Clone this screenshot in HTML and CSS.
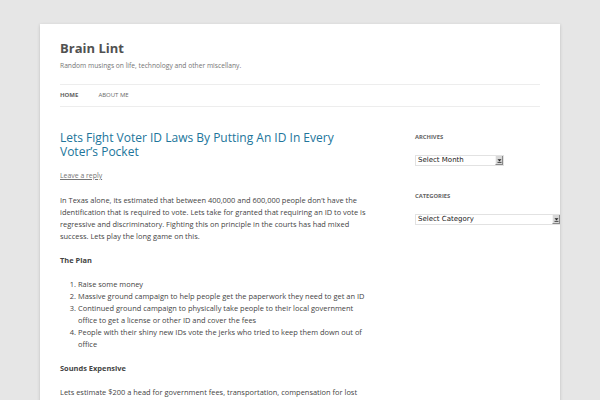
FILE: index.html
```html
<!DOCTYPE html>
<html lang="en">
<head>
<meta charset="utf-8">
<title>Brain Lint</title>
<link rel="stylesheet" href="styles.css">
</head>
<body>
<div class="site">
  <header class="site-header">
    <h1 class="site-title">Brain Lint</h1>
    <h2 class="site-description">Random musings on life, technology and other miscellany.</h2>
    <nav class="main-navigation">
      <ul class="nav-menu">
        <li class="current"><a href="#">Home</a></li>
        <li><a href="#">About Me</a></li>
      </ul>
    </nav>
  </header>
  <div class="main">
    <div class="site-content">
      <article class="post">
        <header class="entry-header">
          <h1 class="entry-title"><a href="#">Lets Fight Voter ID Laws By Putting An ID In Every Voter’s Pocket</a></h1>
          <div class="comments-link"><a href="#">Leave a reply</a></div>
        </header>
        <div class="entry-content">
          <p>In Texas alone, its estimated that between 400,000 and 600,000 people don’t have the identification that is required to vote. Lets take for granted that requiring an ID to vote is regressive and discriminatory. Fighting this on principle in the courts has had mixed success. Lets play the long game on this.</p>
          <p><strong>The Plan</strong></p>
          <ol>
            <li>Raise some money</li>
            <li>Massive ground campaign to help people get the paperwork they need to get an ID</li>
            <li>Continued ground campaign to physically take people to their local government office to get a license or other ID and cover the fees</li>
            <li>People with their shiny new IDs vote the jerks who tried to keep them down out of office</li>
          </ol>
          <p><strong>Sounds Expensive</strong></p>
          <p>Lets estimate $200 a head for government fees, transportation, compensation for lost wages and paperwork. That’s a lot of money for a campaign, but it is a lot less than what is spent on ads every election cycle.</p>
        </div>
      </article>
    </div>
    <aside class="widget-area">
      <section class="widget">
        <h3 class="widget-title">Archives</h3>
        <div class="fake-select month">
          <span class="fs-text">Select Month</span>
          <span class="fs-btn"><svg width="5" height="5" viewBox="0 0 5 5"><path d="M0.5 1.2h4L2.5 3.4z" fill="#222"/><rect x="0.5" y="3.9" width="4" height="0.8" fill="#222"/></svg></span>
        </div>
      </section>
      <section class="widget">
        <h3 class="widget-title">Categories</h3>
        <div class="fake-select category">
          <span class="fs-text">Select Category</span>
          <span class="fs-btn"><svg width="5" height="5" viewBox="0 0 5 5"><path d="M0.5 1.2h4L2.5 3.4z" fill="#222"/><rect x="0.5" y="3.9" width="4" height="0.8" fill="#222"/></svg></span>
        </div>
      </section>
    </aside>
  </div>
</div>
</body>
</html>
```
FILE: styles.css
```css
html, body {
  margin: 0;
  padding: 0;
}
body {
  background: #e6e6e6;
  font-family: "Open Sans", "DejaVu Sans", sans-serif;
  color: #444;
  font-size: 7.45px;
  line-height: 12px;
}
a {
  color: #21759b;
  text-decoration: none;
}
.site {
  width: 480px;
  margin: 24px auto 0;
  padding: 0 20px;
  background: #fff;
  box-shadow: 0 1px 3px rgba(100, 100, 100, 0.3);
  overflow: hidden;
  min-height: 400px;
}
.site-header {
  padding: 12px 0;
}
.site-title {
  margin: 0;
  font-size: 13px;
  line-height: 24px;
  font-weight: bold;
  color: #515151;
}
.site-description {
  margin: 0;
  font-size: 6.7px;
  line-height: 12px;
  font-weight: normal;
  color: #757575;
}
.main-navigation {
  margin-top: 12px;
}
.nav-menu {
  list-style: none;
  margin: 0;
  padding: 0;
  display: flex;
  border-top: 1px solid #ededed;
  border-bottom: 1px solid #ededed;
}
.nav-menu li {
  margin-right: 20px;
  font-size: 6px;
  line-height: 21px;
  text-transform: uppercase;
}
.nav-menu li a {
  color: #6a6a6a;
}
.nav-menu li.current a {
  color: #636363;
  font-weight: bold;
}
.main {
  display: flex;
  justify-content: space-between;
  align-items: flex-start;
  margin-top: 12px;
}
.site-content {
  width: 312.5px;
}
.entry-header {
  margin-bottom: 12px;
}
.entry-title {
  margin: 0;
  font-size: 12px;
  line-height: 14px;
  font-weight: normal;
}
.entry-title a {
  color: #21759b;
}
.comments-link {
  margin-top: 11px;
  font-size: 6.9px;
  line-height: 12px;
}
.comments-link a {
  color: #757575;
  text-decoration: underline;
}
.entry-content p {
  margin: 0 0 12px;
}
.entry-content strong {
  font-weight: bold;
}
.entry-content ol {
  margin: 0 0 12px;
  padding: 0;
  list-style: decimal;
}
.entry-content ol li {
  margin-left: 18px;
}
.widget-area {
  width: 125px;
}
.widget {
  margin-bottom: 24px;
}
.widget-title {
  margin: 0 0 12px;
  font-size: 5.8px;
  line-height: 12px;
  font-weight: bold;
  text-transform: uppercase;
  color: #636363;
}
.fake-select {
  display: flex;
  align-items: stretch;
  height: 11px;
  margin-top: 2px;
  border: 1px solid #e2e2e2;
  background: #fff;
  box-sizing: border-box;
  font-family: "DejaVu Sans", sans-serif;
  font-size: 7px;
  color: #222;
}
.fake-select.month {
  width: 89px;
}
.fake-select.category {
  width: 146px;
}
.fs-text {
  flex: 1;
  padding-left: 2px;
  line-height: 9px;
  white-space: nowrap;
}
.fs-btn {
  width: 8px;
  display: flex;
  align-items: center;
  justify-content: center;
  background: #d8d8d8;
  border-left: 1px solid #f4f4f4;
  border-right: 1px solid #888;
  border-bottom: 1px solid #888;
  box-sizing: border-box;
}
```
